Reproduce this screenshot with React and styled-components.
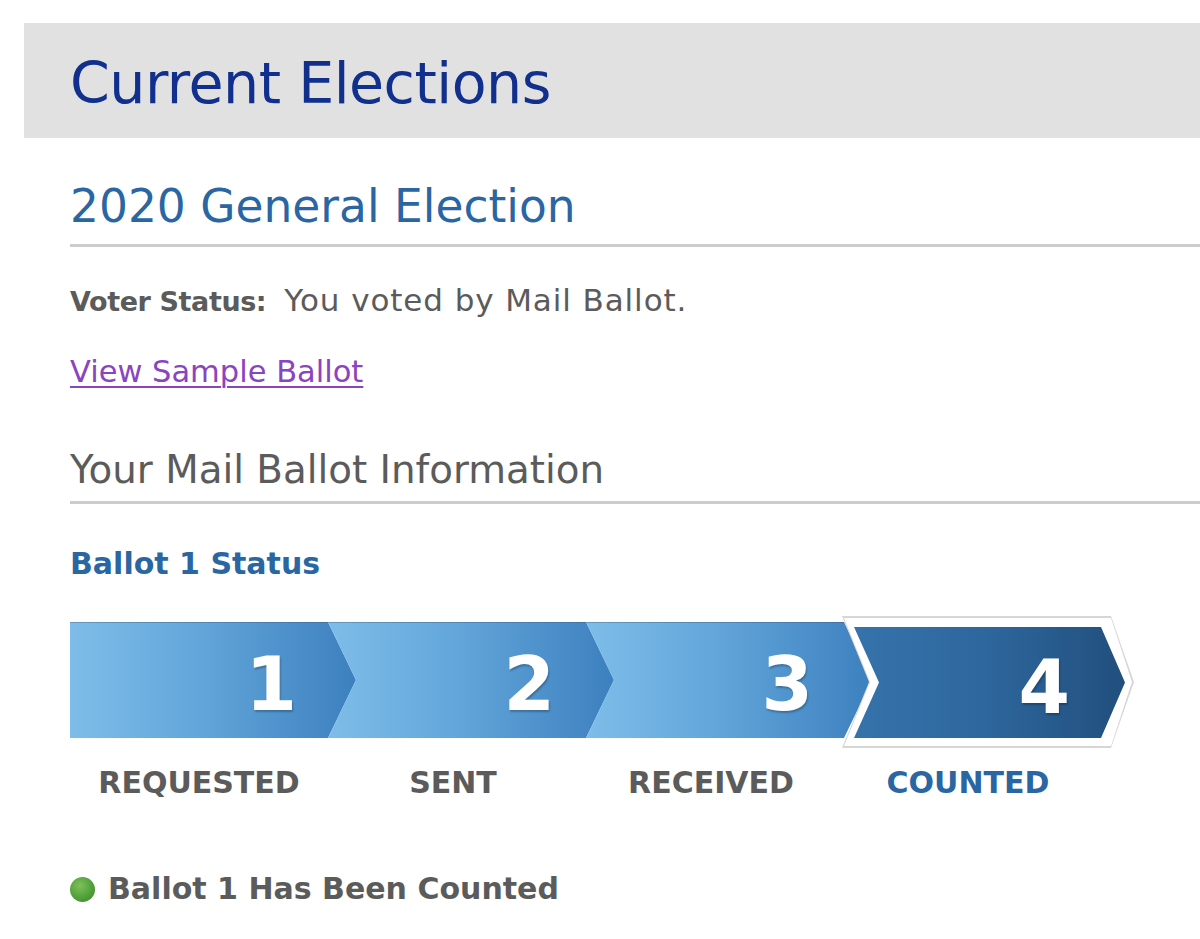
import React from 'react'
import styled, { createGlobalStyle } from 'styled-components'

const GlobalStyle = createGlobalStyle`
  body {
    margin: 0;
    background: #fff;
    font-family: "DejaVu Sans", Verdana, sans-serif;
  }
`

const colors = {
  navy: '#112f8d',
  blue: '#2a66a2',
  grey: '#5b5b5b',
  rule: '#cccccc',
  purple: '#8b44bf',
}

const Page = styled.div`
  padding: 23px 0 40px 24px;
`

const Banner = styled.div`
  display: flex;
  align-items: center;
  height: 115px;
  padding-left: 46px;
  background: #e1e1e1;
  h1 {
    margin: 4px 0 0;
    font-weight: normal;
    font-size: 57px;
    letter-spacing: -0.5px;
    color: ${colors.navy};
  }
`

const Content = styled.div`
  padding-left: 46px;
`

const SectionTitle = styled.h2`
  margin: ${p => p.$top}px 0 0;
  padding-bottom: ${p => p.$pad}px;
  border-bottom: 3px solid ${colors.rule};
  font-weight: normal;
  font-size: ${p => p.$size}px;
  line-height: ${p => p.$lh}px;
  color: ${p => p.$color};
`

const StatusLine = styled.p`
  margin: 35px 0 0;
  line-height: 36px;
  color: ${colors.grey};
  font-size: 31px;
  letter-spacing: 0.9px;
  b {
    font-size: 27px;
    letter-spacing: -0.4px;
    margin-right: 18px;
  }
`

const SampleLink = styled.a`
  display: inline-block;
  margin-top: 34px;
  line-height: 36px;
  font-size: 30.5px;
  color: ${colors.purple};
  text-decoration: underline;
  text-underline-offset: 4px;
  text-decoration-thickness: 2px;
`

const BallotHeading = styled.h3`
  margin: 42px 0 0;
  font-size: 30px;
  line-height: 36px;
  color: ${colors.blue};
`

const Steps = styled.div`
  display: flex;
  align-items: flex-start;
  margin-top: 34px;
`

const Step = styled.div`
  display: flex;
  flex-direction: column;
  margin-left: ${p => p.$offset}px;
`

const Chevron = styled.div`
  display: flex;
  align-items: center;
  justify-content: flex-end;
  width: ${p => p.$width}px;
  height: 116px;
  margin-top: 6px;
  padding: 8px 60px 0 0;
  box-sizing: border-box;
  background: linear-gradient(90deg, #7ebde9 0%, #62a6da 45%, #3d80bf 100%);
  box-shadow: inset 0 1px 0 rgba(60, 80, 100, 0.35);
  clip-path: ${p =>
    p.$first
      ? 'polygon(0 0, calc(100% - 28px) 0, 100% 50%, calc(100% - 28px) 100%, 0 100%)'
      : 'polygon(0 0, calc(100% - 28px) 0, 100% 50%, calc(100% - 28px) 100%, 0 100%, 28px 50%)'};
`

const ActiveOutline = styled.div`
  width: 292px;
  height: 132px;
  padding: 2px;
  box-sizing: border-box;
  background: #d6d6d6;
  clip-path: polygon(0 0, 269px 0, 100% 50%, 269px 100%, 0 100%, 27px 50%);
`

const ActiveFrame = styled.div`
  height: 100%;
  padding: 9px 7px 8px 10px;
  box-sizing: border-box;
  background: #fff;
  clip-path: polygon(0 0, 267px 0, 100% 50%, 267px 100%, 0 100%, 26px 50%);
`

const ActiveChevron = styled.div`
  display: flex;
  align-items: center;
  justify-content: flex-end;
  height: 100%;
  padding: 8px 56px 0 0;
  box-sizing: border-box;
  background: linear-gradient(90deg, #3673ab 0%, #2d669c 50%, #214f7d 100%);
  clip-path: polygon(0 0, calc(100% - 24px) 0, 100% 50%, calc(100% - 24px) 100%, 0 100%, 25px 50%);
`

const Digit = styled.span`
  font-size: 74px;
  font-weight: bold;
  line-height: 1;
  letter-spacing: -1px;
  color: #fff;
  text-shadow: 1px 2px 2px rgba(0, 0, 0, 0.25);
`

const StepLabel = styled.div`
  margin-top: ${p => p.$top}px;
  padding-right: ${p => p.$shift}px;
  text-align: center;
  font-size: 30px;
  font-weight: bold;
  line-height: 36px;
  color: ${p => (p.$active ? colors.blue : colors.grey)};
`

const Result = styled.div`
  display: flex;
  align-items: center;
  gap: 13px;
  margin-top: 70px;
  font-size: 30px;
  font-weight: bold;
  line-height: 36px;
  color: ${colors.grey};
`

const Dot = styled.span`
  width: 25px;
  height: 25px;
  border-radius: 50%;
  background: radial-gradient(circle at 40% 35%, #7cc05a 0%, #52a03a 55%, #3b7f2a 100%);
`

const steps = [
  { n: 1, label: 'REQUESTED', width: 286, offset: 0, shift: 28 },
  { n: 2, label: 'SENT', width: 286, offset: -28, shift: 36 },
  { n: 3, label: 'RECEIVED', width: 286, offset: -28, shift: 36 },
]

const App = () => {
  return (
    <Page>
      <GlobalStyle />
      <Banner>
        <h1>Current Elections</h1>
      </Banner>
      <Content>
        <SectionTitle $top={42} $pad={10} $size={45.5} $lh={54} $color={colors.blue}>
          2020 General Election
        </SectionTitle>
        <StatusLine>
          <b>Voter Status:</b>You voted by Mail Ballot.
        </StatusLine>
        <SampleLink href="#">View Sample Ballot</SampleLink>
        <SectionTitle $top={57} $pad={8} $size={38.8} $lh={46} $color={colors.grey}>
          Your Mail Ballot Information
        </SectionTitle>
        <BallotHeading>Ballot 1 Status</BallotHeading>
        <Steps>
          {steps.map((s, i) => (
            <Step key={s.n} $offset={s.offset}>
              <Chevron $width={s.width} $first={i === 0}>
                <Digit>{s.n}</Digit>
              </Chevron>
              <StepLabel $top={27} $shift={s.shift}>{s.label}</StepLabel>
            </Step>
          ))}
          <Step $offset={-30}>
            <ActiveOutline>
              <ActiveFrame>
                <ActiveChevron>
                  <Digit>4</Digit>
                </ActiveChevron>
              </ActiveFrame>
            </ActiveOutline>
            <StepLabel $top={17} $shift={40} $active>COUNTED</StepLabel>
          </Step>
        </Steps>
        <Result>
          <Dot />
          Ballot 1 Has Been Counted
        </Result>
      </Content>
    </Page>
  )
}

export default App
